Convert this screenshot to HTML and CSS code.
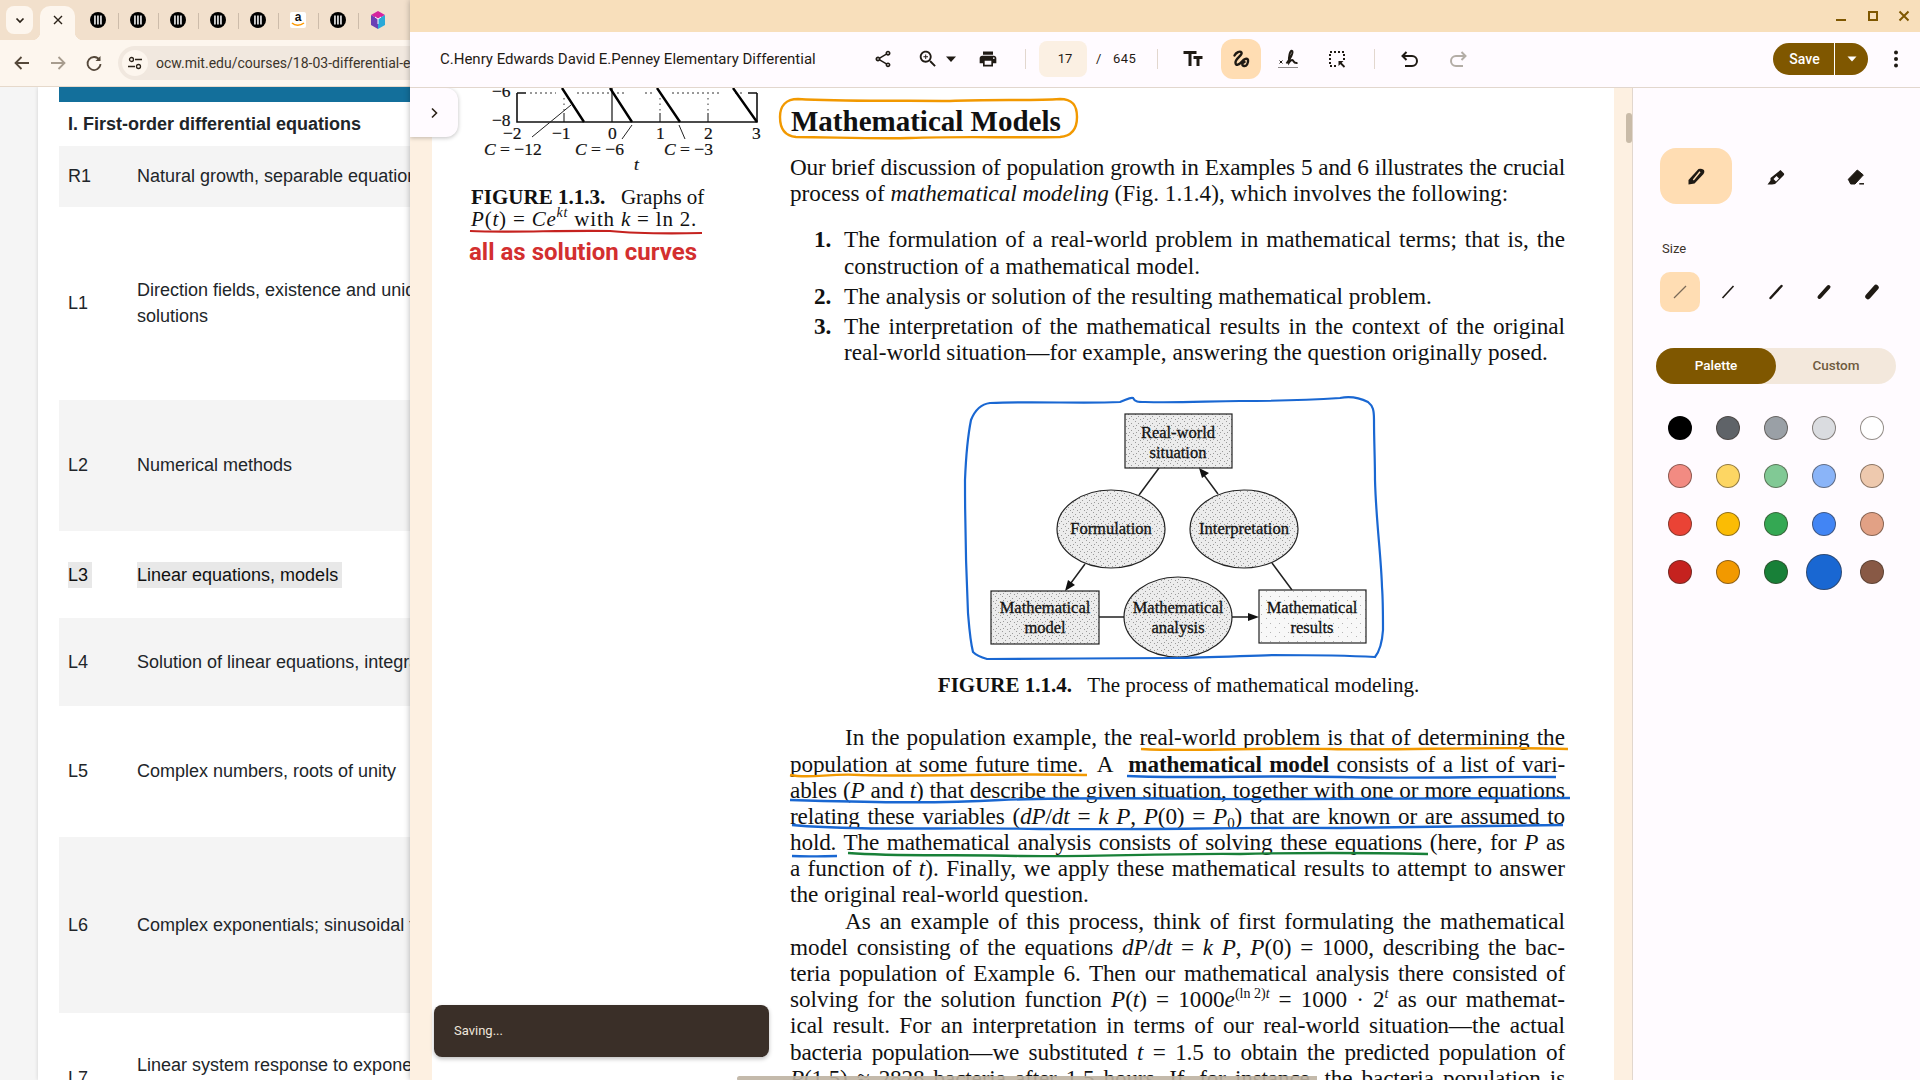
FILE: index.html
```html
<!DOCTYPE html>
<html lang="en">
<head>
    <meta charset="utf-8">
    <title>Elementary Differential</title>
    <link rel="stylesheet" href="styles.css">
</head>
<body>
<svg class="defs" width="0" height="0">
    <symbol id="mit" viewBox="0 0 16 16">
        <circle cx="8" cy="8" r="8" fill="#000"/>
        <path d="M4.2 3.5h1.5v9H4.2zM7.2 3.5h1.5v9H7.2zM10.2 3.5h1.5v9h-1.5z" fill="#fff"/>
    </symbol>
</svg>

<div class="screen">
    <!-- browser behind the reader window -->
    <div class="browser">
        <div class="tabstrip">
            <div class="tab-menu">
                <svg width="12" height="12" viewBox="0 0 12 12"><path d="M2.5 4.5 6 8l3.5-3.5" fill="none" stroke="#2b2218" stroke-width="1.7"/></svg>
            </div>
            <div class="tab-active">
                <svg width="10" height="10" viewBox="0 0 10 10"><path d="M1 1l8 8M9 1 1 9" stroke="#2b2218" stroke-width="1.4"/></svg>
            </div>
            <div class="tab-icon"><svg width="16" height="16"><use href="#mit"/></svg></div>
            <div class="tab-icon"><svg width="16" height="16"><use href="#mit"/></svg></div>
            <div class="tab-icon"><svg width="16" height="16"><use href="#mit"/></svg></div>
            <div class="tab-icon"><svg width="16" height="16"><use href="#mit"/></svg></div>
            <div class="tab-icon"><svg width="16" height="16"><use href="#mit"/></svg></div>
            <div class="tab-icon">
                <span class="amazon">a<svg width="14" height="5" viewBox="0 0 14 5"><path d="M1 1c3 3 8 3 12 0" fill="none" stroke="#f90" stroke-width="1.5"/></svg></span>
            </div>
            <div class="tab-icon"><svg width="16" height="16"><use href="#mit"/></svg></div>
            <div class="tab-icon">
                <svg width="16" height="18" viewBox="0 0 16 18">
                    <path d="M8 0l7 4-7 4-7-4z" fill="#d6249f"/>
                    <path d="M1 4l7 4v10l-7-4z" fill="#6a3fb5"/>
                    <path d="M15 4 8 8v10l7-4z" fill="#2aa9d8"/>
                    <path d="M8 8v5M5 6l3 2 3-2" stroke="#fff" fill="none"/>
                </svg>
            </div>
        </div>
        <div class="addressbar">
            <svg class="nav-btn" width="20" height="20" viewBox="0 0 20 20"><path d="M17 10H4M9.5 4 3.5 10l6 6" fill="none" stroke="#55483a" stroke-width="1.8"/></svg>
            <svg class="nav-btn nav-fwd" width="20" height="20" viewBox="0 0 20 20"><path d="M3 10h13M10.5 4l6 6-6 6" fill="none" stroke="#a79c8e" stroke-width="1.8"/></svg>
            <svg class="nav-btn nav-reload" width="20" height="20" viewBox="0 0 20 20"><path d="M15.5 7A6.5 6.5 0 1 0 16.500 11" fill="none" stroke="#55483a" stroke-width="1.8"/><path d="M16.500 3v5h-5z" fill="#55483a"/></svg>
            <div class="urlpill">
                <span class="site-btn">
                    <svg width="16" height="16" viewBox="0 0 16 16"><circle cx="4.500" cy="4.500" r="2" fill="none" stroke="#2b2218" stroke-width="1.300"/><path d="M8 4.500h7M1 11.500h7" stroke="#2b2218" stroke-width="1.300"/><circle cx="11.500" cy="11.500" r="2" fill="none" stroke="#2b2218" stroke-width="1.300"/></svg>
                </span>
                <span class="url">ocw.mit.edu/courses/18-03-differential-equations/pages/syllabus/</span>
            </div>
        </div>
        <div class="course">
            <div class="course-inner">
                <div class="course-band"></div>
                <h3 class="unit">I. First-order differential equations</h3>
                <div class="row row-r1 shade"><span class="code">R1</span><span class="topic">Natural growth, separable equations</span></div>
                <div class="row row-l1"><span class="code">L1</span><span class="topic">Direction fields, existence and uniqueness of solutions</span></div>
                <div class="row row-l2 shade"><span class="code">L2</span><span class="topic">Numerical methods</span></div>
                <div class="row row-l3"><span class="code"><span class="picked">L3</span></span><span class="topic"><span class="picked">Linear equations, models</span></span></div>
                <div class="row row-l4 shade"><span class="code">L4</span><span class="topic">Solution of linear equations, integrating factors</span></div>
                <div class="row row-l5"><span class="code">L5</span><span class="topic">Complex numbers, roots of unity</span></div>
                <div class="row row-l6 shade"><span class="code">L6</span><span class="topic">Complex exponentials; sinusoidal functions</span></div>
                <div class="row row-l7"><span class="code">L7</span><span class="topic">Linear system response to exponential and sinusoidal input</span></div>
            </div>
        </div>
    </div>

    <!-- pdf reader window -->
    <div class="reader">
        <div class="titlebar">
            <span class="win-min"></span>
            <span class="win-max"></span>
            <svg class="win-close" width="12" height="12" viewBox="0 0 12 12"><path d="M1.500 1.500l9 9M10.500 1.500l-9 9" stroke="#7f5700" stroke-width="2"/></svg>
        </div>
        <div class="toolbar">
            <div class="doc-title">C.Henry Edwards David E.Penney Elementary Differential</div>
            <svg class="icon icon-sm" viewBox="0 0 24 24"><path d="M18 16.080c-.76 0-1.440.3-1.960.77L8.910 12.700c.05-.23.09-.46.09-.7s-.04-.47-.09-.7l7.050-4.110c.54.5 1.250.81 2.040.81 1.660 0 3-1.340 3-3s-1.340-3-3-3-3 1.340-3 3c0 .24.04.47.09.7L8.040 9.810C7.500 9.310 6.790 9 6 9c-1.660 0-3 1.340-3 3s1.340 3 3 3c.79 0 1.500-.31 2.040-.81l7.120 4.160c-.05.21-.08.43-.08.65 0 1.610 1.310 2.920 2.920 2.920 1.610 0 2.920-1.310 2.920-2.920s-1.310-2.920-2.920-2.920zM18 4c.55 0 1 .45 1 1s-.45 1-1 1-1-.45-1-1 .45-1 1-1zM6 13c-.55 0-1-.45-1-1s.45-1 1-1 1 .45 1 1-.45 1-1 1zm12 7.020c-.55 0-1-.45-1-1s.45-1 1-1 1 .45 1 1-.45 1-1 1z"/></svg>
            <svg class="icon icon-zoom" viewBox="0 0 24 24"><path d="M15.500 14h-.79l-.28-.27C15.410 12.590 16 11.110 16 9.500 16 5.910 13.090 3 9.500 3S3 5.910 3 9.500 5.910 16 9.500 16c1.610 0 3.090-.59 4.230-1.570l.27.28v.79l5 4.990L20.490 19l-4.990-5zm-6 0C7.010 14 5 11.990 5 9.500S7.010 5 9.500 5 14 7.010 14 9.500 11.990 14 9.500 14z"/><path d="M12 10h-2v2H9v-2H7V9h2V7h1v2h2v1z"/></svg>
            <svg class="caret ml-6" viewBox="0 0 12 12"><path d="M1 3.500h10L6 9z"/></svg>
            <svg class="icon icon-sm ml-19" viewBox="0 0 24 24"><path d="M19 8H5c-1.660 0-3 1.340-3 3v6h4v4h12v-4h4v-6c0-1.660-1.340-3-3-3zm-3 11H8v-5h8v5zm3-7c-.55 0-1-.45-1-1s.45-1 1-1 1 .45 1 1-.45 1-1 1zm-1-9H6v4h12V3z"/></svg>
            <span class="tb-sep ml-25"></span>
            <span class="page-input ml-13">17</span>
            <span class="page-slash ml-8">/</span>
            <span class="page-total ml-10">645</span>
            <span class="tb-sep ml-18"></span>
            <svg class="icon ml-23" viewBox="0 0 24 24"><path d="M2.500 4v3h5v12h3V7h5V4h-13zm19 5h-9v3h3v7h3v-7h3V9z"/></svg>
            <span class="ink-btn ml-16">
                <svg class="icon" viewBox="0 0 24 24"><path d="M5.500 8.500C7 5.500 11 3.500 12.500 5.500C14 8 6.500 11.500 6.500 15.500C6.500 19.500 10.500 17.500 13 14.500C15 12 18.500 10.500 19 13C19.500 16 17.500 19.500 15 19C12.500 18.500 13 15.500 15.500 15" fill="none" stroke="#1f1a14" stroke-width="2.400" stroke-linecap="round"/></svg>
            </span>
            <svg class="icon ml-15" viewBox="0 0 24 24"><path d="M10.500 16.500C14 12 18 5 16 4C14 3 12.500 10 13 15.500C14 14 16 12 17 13.500S18 16.500 21.500 16" fill="none" stroke="#1f1a14" stroke-width="2"/><path d="M3.500 13.500l3 3M6.500 13.500l-3 3" stroke="#1f1a14"/><path d="M2.500 20.500h20" stroke="#1f1a14" stroke-dasharray="1 1"/></svg>
            <svg class="icon ml-25" viewBox="0 0 24 24"><rect x="5" y="5" width="14" height="14" fill="none" stroke="#1f1a14" stroke-width="2" stroke-dasharray="2 2"/><rect x="12.500" y="13" width="8" height="8" fill="#fffbff"/><path d="M13.500 14h5l-5 5z" fill="#1f1a14"/><path d="M15 15.500l4.500 4.500" stroke="#1f1a14" stroke-width="1.800"/></svg>
            <span class="tb-sep ml-25"></span>
            <svg class="icon ml-23" viewBox="0 0 24 24"><path d="M8.500 5 4.500 9l4 4M5 9h9a5 5 0 0 1 0 10H7" fill="none" stroke="#1f1a14" stroke-width="2"/></svg>
            <svg class="icon ml-24" viewBox="0 0 24 24"><path d="M15.500 5l4 4-4 4M19 9h-9a5 5 0 0 0 0 10h7" fill="none" stroke="#b3ada6" stroke-width="2"/></svg>
            <div class="save-group">
                <span class="save-btn">Save</span>
                <span class="save-more"><svg width="12" height="12" viewBox="0 0 12 12"><path d="M1.500 3.500h9L6 8.500z" fill="#fff"/></svg></span>
            </div>
            <svg class="icon ml-16" viewBox="0 0 24 24"><circle cx="12" cy="5.500" r="2"/><circle cx="12" cy="12" r="2"/><circle cx="12" cy="18.500" r="2"/></svg>
        </div>

        <div class="reader-body">
            <div class="viewer">
                <div class="page">
                    <div class="margin-col">
                        <svg class="graph" viewBox="470 87 320 88" width="320" height="88">
                            <path d="M517 92v29H757V92" fill="none" stroke="#111" stroke-width="1.600"/>
                            <path d="M517 92h9M748 92h9" stroke="#111" stroke-width="1.600"/>
                            <path d="M530 92h26M577 92h50M645 92h10M672 92h50M735 92h8" stroke="#333" stroke-dasharray="2 3"/>
                            <path d="M612 87v34" stroke="#111" stroke-width="1.200"/>
                            <path d="M564 97v14M660 97v14M708 97v14" stroke="#333" stroke-dasharray="1.500 4"/>
                            <path d="M564 112v9M660 112v9M708 112v9" stroke="#111"/>
                            <path d="M562 87l22 34M610 87l22 34M657 87l23 34M733 87l24 34" stroke="#000" stroke-width="2.400" fill="none"/>
                            <path d="M571 104l-39 32M632 124l-10 14M679 124l6 14" stroke="#222" fill="none"/>
                            <text class="g-num" x="492" y="96">−6</text>
                            <text class="g-num" x="492" y="125">−8</text>
                            <text class="g-num" x="503" y="138">−2</text>
                            <text class="g-num" x="552" y="138">−1</text>
                            <text class="g-num" x="608" y="138">0</text>
                            <text class="g-num" x="656" y="138">1</text>
                            <text class="g-num" x="704" y="138">2</text>
                            <text class="g-num" x="752" y="138">3</text>
                            <text class="g-num" x="484" y="154"><tspan class="it">C</tspan> = −12</text>
                            <text class="g-num" x="575" y="154"><tspan class="it">C</tspan> = −6</text>
                            <text class="g-num" x="664" y="154"><tspan class="it">C</tspan> = −3</text>
                            <text class="g-num it" x="634" y="169">t</text>
                        </svg>
                        <p class="fig-side"><b>FIGURE 1.1.3.</b>&nbsp;&nbsp; Graphs of<br><span class="fig-math"><i>P</i>(<i>t</i>) = <i>Ce<sup class="sup">kt</sup></i> with <i>k</i> = ln 2.</span></p>
                        <p class="note">all as solution curves</p>
                    </div>

                    <div class="main-col">
                        <h2 class="sec-title">Mathematical Models</h2>
                        <div class="para">
                            <div class="ln tight">Our brief discussion of population growth in Examples 5 and 6 illustrates the crucial</div>
                            <div class="ln ln-end">process of <i>mathematical modeling</i> (Fig. 1.1.4), which involves the following:</div>
                        </div>
                        <ol class="steps">
                            <li class="step">
                                <b class="step-no">1.</b>
                                <div class="step-text">
                                    <div class="ln">The formulation of a real-world problem in mathematical terms; that is, the</div>
                                    <div class="ln ln-end">construction of a mathematical model.</div>
                                </div>
                            </li>
                            <li class="step">
                                <b class="step-no">2.</b>
                                <div class="step-text"><div class="ln ln-end">The analysis or solution of the resulting mathematical problem.</div></div>
                            </li>
                            <li class="step">
                                <b class="step-no">3.</b>
                                <div class="step-text">
                                    <div class="ln">The interpretation of the mathematical results in the context of the original</div>
                                    <div class="ln ln-end">real-world situation—for example, answering the question originally posed.</div>
                                </div>
                            </li>
                        </ol>

                        <svg class="diagram" viewBox="790 395 775 270" width="775" height="270">
                            <defs>
                                <pattern id="stipple" width="7" height="7" patternUnits="userSpaceOnUse">
                                    <rect width="7" height="7" fill="#ececec"/>
                                    <path d="M1 1h1v1H1zM4 3h1v1H4zM2 5h1v1H2zM6 6h1v1H6z" fill="#9a9a9a"/>
                                </pattern>
                                <pattern id="stipple-light" width="9" height="9" patternUnits="userSpaceOnUse">
                                    <rect width="9" height="9" fill="#f8f8f8"/>
                                    <path d="M1 2h1v1H1zM6 6h1v1H6z" fill="#b5b5b5"/>
                                </pattern>
                            </defs>
                            <path class="d-line" d="M1159 468l-20 27M1218 494l-17 -23M1085 564l-17 23M1272 563l20 27M1099 617h26M1232 617h20"/>
                            <path d="M1199 468l10 5-7 5zM1065 591l3-11 7 5zM1259 617l-11-4v8z" fill="#111"/>
                            <rect class="d-box" x="1125" y="414" width="107" height="54"/>
                            <rect class="d-box" x="991" y="591" width="108" height="53"/>
                            <rect class="d-box d-light" x="1259" y="590" width="107" height="53"/>
                            <ellipse class="d-box" cx="1111" cy="529" rx="54" ry="39"/>
                            <ellipse class="d-box" cx="1244" cy="529" rx="54" ry="39"/>
                            <ellipse class="d-box" cx="1178" cy="617" rx="54" ry="40"/>
                            <text class="d-txt" x="1178" y="438">Real-world</text>
                            <text class="d-txt" x="1178" y="458">situation</text>
                            <text class="d-txt" x="1111" y="534">Formulation</text>
                            <text class="d-txt" x="1244" y="534">Interpretation</text>
                            <text class="d-txt" x="1045" y="613">Mathematical</text>
                            <text class="d-txt" x="1045" y="633">model</text>
                            <text class="d-txt" x="1178" y="613">Mathematical</text>
                            <text class="d-txt" x="1178" y="633">analysis</text>
                            <text class="d-txt" x="1312" y="613">Mathematical</text>
                            <text class="d-txt" x="1312" y="633">results</text>
                            <path class="scribble-blue" d="M990 403C1040 401 1080 404 1120 402C1126 400 1130 397 1133 398C1135 402 1138 402 1145 402C1180 403 1210 401 1240 401C1280 401 1310 400 1340 398C1350 396 1360 398 1368 402C1373 406 1374 410 1374 420C1374 440 1375 460 1375 480C1376 520 1381 555 1382 587C1383 600 1383 615 1383 630C1382 645 1379 652 1375 657C1340 655 1305 655 1273 655C1240 656 1205 658 1173 658C1110 658 1050 659 987 659C980 657 976 655 973 652C970 640 969 625 968 613C966 570 965 525 965 480C966 455 968 435 971 420C975 410 982 404 990 403Z"/>
                        </svg>
                        <p class="fig-cap"><b>FIGURE 1.1.4.</b>&nbsp;&nbsp; The process of mathematical modeling.</p>

                        <div class="para body-text">
                            <div class="ln ln-indent">In the population example, the real-world problem is that of determining the</div>
                            <div class="ln tight">population at some future time.&nbsp; A&nbsp; <b>mathematical model</b> consists of a list of vari-</div>
                            <div class="ln tight">ables (<i>P</i> and <i>t</i>) that describe the given situation, together with one or more equations</div>
                            <div class="ln tight">relating these variables (<i>dP</i>/<i>dt</i> = <i>k P</i>, <i>P</i>(0) = <i>P</i><sub class="sub">0</sub>) that are known or are assumed to</div>
                            <div class="ln tight">hold. The mathematical analysis consists of solving these equations (here, for <i>P</i> as</div>
                            <div class="ln">a function of <i>t</i>). Finally, we apply these mathematical results to attempt to answer</div>
                            <div class="ln ln-end">the original real-world question.</div>
                            <div class="ln ln-indent">As an example of this process, think of first formulating the mathematical</div>
                            <div class="ln">model consisting of the equations <i>dP</i>/<i>dt</i> = <i>k P</i>, <i>P</i>(0) = 1000, describing the bac-</div>
                            <div class="ln tight">teria population of Example 6. Then our mathematical analysis there consisted of</div>
                            <div class="ln">solving for the solution function <i>P</i>(<i>t</i>) = 1000<i>e</i><sup class="sup">(ln 2)<i>t</i></sup> = 1000 · 2<sup class="sup"><i>t</i></sup> as our mathemat-</div>
                            <div class="ln">ical result. For an interpretation in terms of our real-world situation—the actual</div>
                            <div class="ln tight">bacteria population—we substituted <i>t</i> = 1.5 to obtain the predicted population of</div>
                            <div class="ln tight"><i>P</i>(1.5) ≈ 2828 bacteria after 1.5 hours. If, for instance, the bacteria population is</div>
                        </div>
                    </div>

                    <!-- pen strokes drawn over the page -->
                    <svg class="strokes" viewBox="432 87 1182 993">
                        <path class="ink-orange" d="M798 98C850 101 900 99 950 100C990 98 1030 100 1060 98C1072 98 1077 104 1077 116C1077 128 1072 135 1060 136C1010 137 960 135 910 137C870 138 830 136 796 136C785 135 780 128 780 116C780 105 786 98 798 98Z"/>
                        <path class="ink-red" d="M470 230C510 232 560 229 610 230C630 232 650 233 702 232"/>
                        <path class="ink-orange" d="M1141 748C1200 751 1260 746 1330 748C1400 750 1480 745 1568 748"/>
                        <path class="ink-orange" d="M790 774C810 778 830 772 860 774C930 776 1000 772 1087 774"/>
                        <path class="ink-blue" d="M1127 775C1200 778 1270 774 1340 776C1420 778 1490 775 1556 776"/>
                        <path class="ink-blue" d="M790 799C860 801 930 803 1000 799C1100 795 1200 799 1300 798C1400 797 1490 798 1570 797"/>
                        <path class="ink-blue" d="M792 824C860 830 950 826 1040 828C1150 829 1250 826 1340 827C1420 826 1500 825 1563 824"/>
                        <path class="ink-blue" d="M792 855C810 856 825 855 837 855"/>
                        <path class="ink-green" d="M848 852C900 856 960 853 1020 855C1100 856 1180 852 1240 853C1320 851 1380 852 1428 853"/>
                    </svg>
                </div>
                <button class="side-toggle">
                    <svg width="12" height="12" viewBox="0 0 12 12"><path d="M4 1.500 8.500 6 4 10.500" fill="none" stroke="#2b2218" stroke-width="1.600"/></svg>
                </button>
                <div class="toast">Saving...</div>
                <div class="scroll-h"></div>
                <div class="scroll-v"></div>
            </div>

            <aside class="panel">
                <div class="tools">
                    <span class="tool tool-on">
                        <svg class="icon" viewBox="0 0 24 24"><path d="M14.500 5Q17 4 20 6Q21 8 19.500 10L10.500 19.500L4.500 20.500V16Z" fill="#1f1a14"/><path d="M9.300 16 16 7.700" stroke="#ffddb3" stroke-width="1.400"/></svg>
                    </span>
                    <span class="tool">
                        <svg class="icon" viewBox="0 0 24 24"><path d="M16.500 6L20 9.500Q20.500 10.500 19.500 11.500L11 20L8 20.500H3.500L6.500 16.500V14Z" fill="#1f1a14"/><path d="M9.500 15l3-3 2.500 2.500-3 3z" fill="#fffbff"/></svg>
                    </span>
                    <span class="tool">
                        <svg class="icon" viewBox="0 0 24 24"><path d="M13.300 6L19.300 11L11 20H6.700L4.300 15.300Z" fill="#1f1a14" stroke="#1f1a14" stroke-linejoin="round"/><path d="M15.300 19.800H20" stroke="#1f1a14" stroke-width="1.500"/></svg>
                    </span>
                </div>
                <div class="size-label">Size</div>
                <div class="sizes">
                    <span class="size size-on"><svg width="24" height="24" viewBox="0 0 24 24"><path d="M6 18 18 6" stroke="#7a6a58" stroke-width="1.200"/></svg></span>
                    <span class="size"><svg width="24" height="24" viewBox="0 0 24 24"><path d="M6.500 18 17.500 6" stroke="#1f1a14" stroke-width="1.600"/></svg></span>
                    <span class="size"><svg width="24" height="24" viewBox="0 0 24 24"><path d="M6.500 18 17.500 6" stroke="#1f1a14" stroke-width="2.400" stroke-linecap="round"/></svg></span>
                    <span class="size"><svg width="24" height="24" viewBox="0 0 24 24"><path d="M7.500 17 16.500 7" stroke="#1f1a14" stroke-width="4" stroke-linecap="round"/></svg></span>
                    <span class="size"><svg width="24" height="24" viewBox="0 0 24 24"><path d="M8 16.500 16 7.500" stroke="#1f1a14" stroke-width="5.500" stroke-linecap="round"/></svg></span>
                </div>
                <div class="toggle">
                    <span class="toggle-on">Palette</span>
                    <span class="toggle-off">Custom</span>
                </div>
                <div class="swatches">
                    <span class="swatch no-ring c-black"></span>
                    <span class="swatch c-grey1"></span>
                    <span class="swatch c-grey2"></span>
                    <span class="swatch c-grey3"></span>
                    <span class="swatch c-white"></span>
                    <span class="swatch c-red1"></span>
                    <span class="swatch c-yellow1"></span>
                    <span class="swatch c-green1"></span>
                    <span class="swatch c-blue1"></span>
                    <span class="swatch c-tan1"></span>
                    <span class="swatch c-red2"></span>
                    <span class="swatch c-yellow2"></span>
                    <span class="swatch c-green2"></span>
                    <span class="swatch c-blue2"></span>
                    <span class="swatch c-tan2"></span>
                    <span class="swatch c-red3"></span>
                    <span class="swatch c-yellow3"></span>
                    <span class="swatch c-green3"></span>
                    <span class="swatch swatch-on c-blue3"></span>
                    <span class="swatch c-tan3"></span>
                </div>
            </aside>
        </div>
    </div>
</div>
</body>
</html>
```
FILE: styles.css
```css
/* Global */
* {
    box-sizing: border-box;
}

body {
    margin: 0;
    font-family: "Liberation Sans", Arial, sans-serif;
    background: #fff;
}

.defs {
    position: absolute;
}

.screen {
    position: relative;
    width: 1920px;
    height: 1080px;
    overflow: hidden;
}

/* Browser behind */
.browser {
    width: 1920px;
    height: 1080px;
    display: flex;
    flex-direction: column;
    background: #f5f5f5;
}

.tabstrip {
    height: 40px;
    display: flex;
    align-items: flex-end;
    padding-left: 6px;
    background: #f2e0cc;
}

.tab-menu {
    width: 27px;
    height: 28px;
    margin-bottom: 6px;
    display: flex;
    align-items: center;
    justify-content: center;
    border-radius: 8px;
    background: #fdf6ee;
}

.tab-active {
    position: relative;
    width: 35px;
    height: 34px;
    margin-left: 7px;
    margin-right: 3px;
    padding-bottom: 6px;
    display: flex;
    align-items: center;
    justify-content: center;
    border-radius: 10px 10px 0 0;
    background: #fdf6ee;
}

/* flared feet of the active tab */
.tab-active::before,
.tab-active::after {
    content: "";
    position: absolute;
    bottom: 0;
    width: 8px;
    height: 8px;
}

.tab-active::before {
    left: -8px;
    background: radial-gradient(circle at 0 0, transparent 8px, #fdf6ee 8.500px);
}

.tab-active::after {
    right: -8px;
    background: radial-gradient(circle at 100% 0, transparent 8px, #fdf6ee 8.500px);
}

.tab-icon {
    width: 40px;
    height: 34px;
    padding-bottom: 6px;
    display: flex;
    align-items: center;
    justify-content: center;
    position: relative;
}

.tab-icon + .tab-icon::before {
    content: "";
    position: absolute;
    left: 0;
    top: 7px;
    height: 16px;
    width: 1px;
    background: #cdbcaa;
}

.amazon {
    width: 16px;
    height: 16px;
    border-radius: 2px;
    background: #fff;
    display: flex;
    flex-direction: column;
    align-items: center;
    font: bold 12px/10px "Liberation Sans", sans-serif;
    color: #111;
}

.addressbar {
    height: 47px;
    display: flex;
    align-items: center;
    background: #fdf6ee;
    border-bottom: 1px solid #e6d9cb;
    padding-left: 12px;
}

.nav-fwd {
    margin-left: 16px;
}

.nav-reload {
    margin-left: 16px;
}

.urlpill {
    width: 1000px;
    height: 34px;
    margin-left: 14px;
    padding-left: 4px;
    display: flex;
    align-items: center;
    border-radius: 17px;
    background: #f1e8df;
}

.site-btn {
    width: 26px;
    height: 26px;
    display: flex;
    align-items: center;
    justify-content: center;
    border-radius: 50%;
    background: #fdf6ee;
}

.url {
    margin-left: 8px;
    font: 14px "Roboto", sans-serif;
    color: #3c342b;
    white-space: nowrap;
}

.course {
    flex: 1;
    padding-left: 38px;
    overflow: hidden;
}

.course-inner {
    width: 1300px;
    height: 100%;
    padding: 0 21px;
    background: #fff;
    box-shadow: 0 0 4px rgba(0, 0, 0, 0.15);
}

.course-band {
    height: 15px;
    background: #136f9b;
}

.unit {
    height: 44px;
    margin: 0;
    padding-left: 9px;
    font-size: 18px;
    line-height: 44px;
    font-weight: bold;
    color: #212529;
}

.row {
    display: flex;
    align-items: center;
    padding-left: 9px;
    padding-bottom: 1px;
    font-size: 18px;
    line-height: 26px;
    color: #212529;
}

.shade {
    background: #f4f4f4;
}

.code {
    width: 69px;
    flex: none;
}

.topic {
    width: 400px;
}

.picked {
    display: inline-block;
    padding-right: 4px;
    background: #e8e8e8;
    color: #111;
}

.row-r1 { height: 61px; }
.row-l1 { height: 193px; }
.row-l2 { height: 131px; }
.row-l3 { height: 87px; padding-bottom: 0; }
.row-l4 { height: 88px; }
.row-l5 { height: 131px; }
.row-l6 { height: 176px; }
.row-l7 { height: 130px; }

/* Reader window */
.reader {
    position: absolute;
    left: 410px;
    top: 0;
    width: 1510px;
    height: 1080px;
    display: flex;
    flex-direction: column;
    box-shadow: 0 0 6px rgba(0, 0, 0, 0.3);
}

.titlebar {
    height: 32px;
    flex: none;
    display: flex;
    align-items: center;
    justify-content: flex-end;
    padding-right: 10px;
    background: #f8dfbb;
}

.win-min {
    width: 10px;
    height: 2px;
    margin-top: 8px;
    background: #7f5700;
}

.win-max {
    width: 10px;
    height: 10px;
    margin-left: 22px;
    border: 2px solid #7f5700;
}

.win-close {
    margin-left: 20px;
}

.toolbar {
    height: 56px;
    flex: none;
    display: flex;
    align-items: center;
    padding: 0 12px 2px 30px;
    background: #fffbff;
    border-bottom: 1px solid #e2d7ce;
}

.doc-title {
    width: 431px;
    flex: none;
    margin-top: 1px;
    font: 15px "Roboto", sans-serif;
    color: #1f1a14;
    white-space: nowrap;
}

.icon {
    width: 24px;
    height: 24px;
    flex: none;
    fill: #1f1a14;
}

.icon-sm {
    width: 20px;
    height: 20px;
    margin-left: 2px;
    margin-right: 2px;
}

.icon-sm.ml-19 {
    margin-left: 21px;
}

.icon-zoom {
    width: 22px;
    height: 22px;
    margin-left: 22px;
}

.caret {
    width: 12px;
    height: 12px;
    flex: none;
    fill: #1f1a14;
}

.ml-6 { margin-left: 6px; }
.ml-8 { margin-left: 8px; }
.ml-10 { margin-left: 10px; }
.ml-13 { margin-left: 13px; }
.ml-15 { margin-left: 15px; }
.ml-16 { margin-left: 16px; }
.ml-18 { margin-left: 18px; }
.ml-19 { margin-left: 19px; }
.ml-23 { margin-left: 23px; }
.ml-24 { margin-left: 24px; }
.ml-25 { margin-left: 25px; }

.tb-sep {
    width: 1px;
    height: 20px;
    flex: none;
    background: #e2d7ce;
}

.page-input {
    width: 48px;
    height: 36px;
    flex: none;
    padding-left: 4px;
    border-radius: 8px;
    background: #fbf0e3;
    font: 13px/36px "Roboto", sans-serif;
    color: #1f1a14;
    text-align: center;
}

.page-slash {
    width: 6px;
    flex: none;
    padding-left: 1px;
    font: 13px "Roboto", sans-serif;
    color: #1f1a14;
}

.page-total {
    width: 28px;
    flex: none;
    position: relative;
    left: 2px;
    font: 13px "Roboto", sans-serif;
    letter-spacing: 0.4px;
    color: #1f1a14;
}

.ink-btn {
    width: 40px;
    height: 40px;
    flex: none;
    display: flex;
    align-items: center;
    justify-content: center;
    border-radius: 12px;
    background: #ffddb3;
}

.save-group {
    margin-left: auto;
    width: 95px;
    height: 32px;
    flex: none;
    display: flex;
    border-radius: 16px;
    overflow: hidden;
    background: #7f5700;
    color: #fff;
}

.save-btn {
    width: 62px;
    border-right: 1px solid #fff;
    padding-left: 2px;
    font: 500 14px/32px "Roboto", sans-serif;
    text-align: center;
}

.save-more {
    flex: 1;
    display: flex;
    align-items: center;
    justify-content: center;
}

.reader-body {
    flex: 1;
    display: flex;
    min-height: 0;
}

/* Page viewer */
.viewer {
    position: relative;
    width: 1222px;
    flex: none;
    overflow: hidden;
    padding-left: 22px;
    background: #fdf0e1;
}

.page {
    position: relative;
    width: 1182px;
    height: 993px;
    overflow: hidden;
    display: flex;
    background: #fff;
    font-family: "Liberation Serif", "Times New Roman", serif;
    color: #111;
}

.margin-col {
    width: 358px;
    flex: none;
    padding-left: 39px;
}

.graph {
    display: block;
    margin-left: -1px;
}

.g-num {
    font-size: 17.500px;
    font-family: "Liberation Serif", serif;
    fill: #111;
    stroke: #111;
    stroke-width: 0.200;
}

.it {
    font-style: italic;
}

.fig-side {
    margin: 10px 0 0;
    font-size: 21px;
    line-height: 22px;
    white-space: nowrap;
}

.fig-math {
    letter-spacing: 0.8px;
}

.note {
    margin: 8px 0 0 -2px;
    font: bold 24px/28px "Roboto", sans-serif;
    color: #d32f2f;
    white-space: nowrap;
}

.main-col {
    width: 775px;
    flex: none;
}

.sec-title {
    margin: 16px 0 0 1px;
    font-size: 29px;
    line-height: 34px;
    font-weight: bold;
}

.para {
    margin-top: 16px;
}

.ln {
    height: 26.200px;
    font-size: 23.200px;
    line-height: 26.200px;
    text-align: justify;
    text-align-last: justify;
}

.ln-end {
    text-align-last: left;
}

.ln-indent {
    padding-left: 55px;
}

.tight {
    letter-spacing: -0.15px;
}

.sup {
    display: inline-block;
    font-size: 14px;
    line-height: 0;
    vertical-align: 9px;
}

.sub {
    font-size: 15px;
    line-height: 0;
    vertical-align: -4px;
}

.steps {
    list-style: none;
    margin: 20px 0 0;
    padding: 0;
}

.step {
    display: flex;
    margin-top: 4px;
}

.step:first-child {
    margin-top: 0;
}

.step-no {
    width: 54px;
    padding-left: 24px;
    flex: none;
    font-size: 23.200px;
    line-height: 26.200px;
}

.step-text {
    flex: 1;
}

.diagram {
    display: block;
    margin-top: 30px;
}

.d-line {
    fill: none;
    stroke: #222;
    stroke-width: 1.500;
}

.d-box {
    fill: url(#stipple);
    stroke: #222;
    stroke-width: 1.200;
}

.d-light {
    fill: url(#stipple-light);
}

.d-txt {
    font-size: 16.500px;
    font-family: "Liberation Serif", serif;
    text-anchor: middle;
    fill: #111;
    stroke: #111;
    stroke-width: 0.300;
}

.scribble-blue {
    fill: none;
    stroke: #1967d2;
    stroke-width: 2.200;
}

.fig-cap {
    margin: 7px 0 0;
    font-size: 21px;
    line-height: 26px;
    text-align: center;
    padding-left: 2px;
}

.body-text {
    margin-top: 26px;
}

.strokes {
    position: absolute;
    inset: 0;
    width: 1182px;
    height: 993px;
    fill: none;
    pointer-events: none;
}

.ink-orange {
    fill: none;
    stroke: #f29900;
    stroke-width: 2.400;
}

.ink-red {
    fill: none;
    stroke: #c5221f;
    stroke-width: 2.200;
}

.ink-blue {
    fill: none;
    stroke: #1967d2;
    stroke-width: 2.400;
}

.ink-green {
    fill: none;
    stroke: #188038;
    stroke-width: 2.400;
}

.side-toggle {
    position: absolute;
    left: 0;
    top: 0;
    width: 48px;
    height: 49px;
    padding: 0;
    border: 0;
    display: flex;
    align-items: center;
    justify-content: center;
    border-radius: 0 12px 12px 0;
    background: #fffbff;
    box-shadow: 0 1px 4px rgba(0, 0, 0, 0.25);
}

.toast {
    position: absolute;
    left: 24px;
    top: 917px;
    width: 335px;
    height: 52px;
    padding-left: 20px;
    border-radius: 8px;
    background: #3a2f28;
    box-shadow: 0 2px 4px rgba(0, 0, 0, 0.25);
    font: 13px/52px "Roboto", sans-serif;
    color: #efe6dc;
}

.scroll-h {
    position: absolute;
    left: 327px;
    top: 988px;
    width: 580px;
    height: 5px;
    border-radius: 3px 0 0 3px;
    background: rgba(190, 178, 162, 0.9);
}

.scroll-v {
    position: absolute;
    right: 0;
    top: 25px;
    width: 6px;
    height: 30px;
    border-radius: 3px;
    background: #c9bba8;
}

/* Ink side panel */
.panel {
    width: 288px;
    flex: none;
    padding: 0 23px;
    background: #fffbff;
    border-left: 1px solid #e2d7ce;
}

.tools {
    display: flex;
    gap: 8px;
    margin-top: 60px;
    padding-left: 4px;
}

.tool {
    width: 72px;
    height: 56px;
    display: flex;
    align-items: center;
    justify-content: center;
    border-radius: 16px;
}

.tool-on {
    background: #ffddb3;
}

.size-label {
    margin-top: 36px;
    padding-left: 6px;
    font: 13px/18px "Roboto", sans-serif;
    color: #3c342b;
}

.sizes {
    display: flex;
    gap: 8px;
    margin-top: 14px;
    padding-left: 4px;
}

.size {
    width: 40px;
    height: 40px;
    display: flex;
    align-items: center;
    justify-content: center;
    border-radius: 10px;
}

.size-on {
    background: #ffddb3;
}

.toggle {
    display: flex;
    width: 240px;
    height: 36px;
    margin-top: 36px;
    border-radius: 18px;
    background: #f3e8dc;
    font: 500 13.500px/35px "Roboto", sans-serif;
    text-align: center;
}

.toggle-on {
    width: 120px;
    border-radius: 18px;
    background: #7f5700;
    color: #fff;
}

.toggle-off {
    width: 120px;
    color: #6f5b40;
}

.swatches {
    display: grid;
    grid-template-columns: repeat(5, 48px);
    grid-auto-rows: 48px;
    margin-top: 20px;
    place-items: center;
}

.swatch {
    width: 24px;
    height: 24px;
    border-radius: 50%;
    border: 1px solid rgba(60, 50, 40, 0.55);
}

.no-ring {
    border: 0;
}

.swatch-on {
    width: 36px;
    height: 36px;
}

.c-black { background: #000; }
.c-grey1 { background: #5f6368; }
.c-grey2 { background: #9aa0a6; }
.c-grey3 { background: #dadce0; }
.c-white { background: #fff; }
.c-red1 { background: #f28b82; }
.c-yellow1 { background: #fdd663; }
.c-green1 { background: #81c995; }
.c-blue1 { background: #8ab4f8; }
.c-tan1 { background: #eec9ae; }
.c-red2 { background: #ea4335; }
.c-yellow2 { background: #fbbc04; }
.c-green2 { background: #34a853; }
.c-blue2 { background: #4285f4; }
.c-tan2 { background: #e2a185; }
.c-red3 { background: #c5221f; }
.c-yellow3 { background: #f29900; }
.c-green3 { background: #188038; }
.c-blue3 { background: #1967d2; }
.c-tan3 { background: #885945; }
```
